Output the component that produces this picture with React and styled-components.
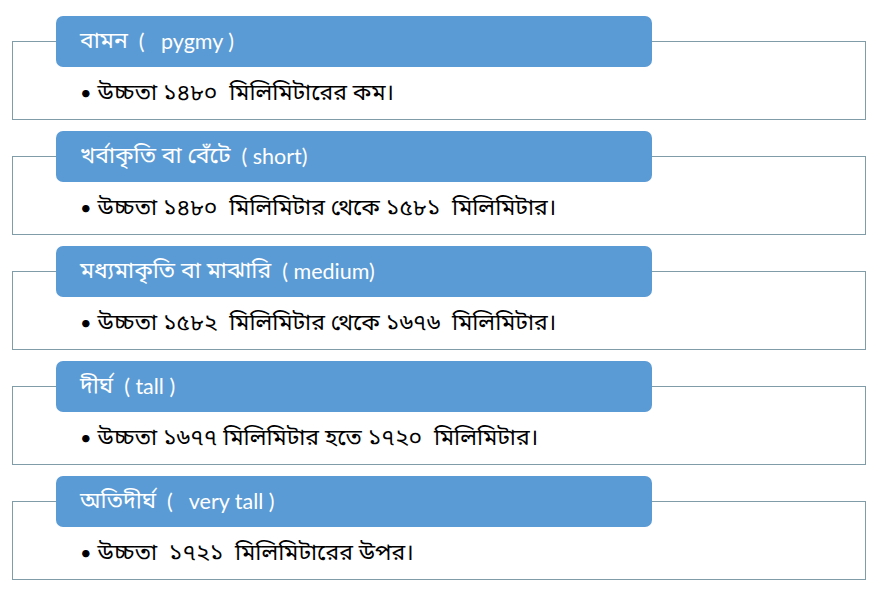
import React from "react";
import { styled, createGlobalStyle } from "styled-components";

const items = [
  { bn: "বামন", en: "  (   pygmy )", text: "উচ্চতা ১৪৮০  মিলিমিটারের কম।" },
  { bn: "খর্বাকৃতি বা বেঁটে", en: "  ( short)", text: "উচ্চতা ১৪৮০  মিলিমিটার থেকে ১৫৮১  মিলিমিটার।" },
  { bn: "মধ্যমাকৃতি বা মাঝারি", en: "  ( medium)", text: "উচ্চতা ১৫৮২  মিলিমিটার থেকে ১৬৭৬  মিলিমিটার।" },
  { bn: "দীর্ঘ", en: "  ( tall )", text: "উচ্চতা ১৬৭৭ মিলিমিটার হতে ১৭২০  মিলিমিটার।" },
  { bn: "অতিদীর্ঘ", en: "  (   very tall )", text: "উচ্চতা  ১৭২১  মিলিমিটারের উপর।" },
];

const App = () => {
  return (
    <>
      <GlobalStyle />
      <Page>
        {items.map((item) => (
          <Item key={item.bn}>
            <Header>
              <Bangla>{item.bn}</Bangla>
              <span>{item.en}</span>
            </Header>
            <Box>
              <Bullet>{item.text}</Bullet>
            </Box>
          </Item>
        ))}
      </Page>
    </>
  );
};

const GlobalStyle = createGlobalStyle`
  body {
    margin: 0;
    background: #ffffff;
    font-family: Lato, "Noto Sans Bengali", "Noto Sans", sans-serif;
  }
`;

const Page = styled.div`
  width: 881px;
  height: 593px;
  box-sizing: border-box;
  padding: 16px 15px 0 12px;
  display: flex;
  flex-direction: column;
  gap: 11px;
`;

const Item = styled.div`
  display: flex;
  flex-direction: column;
`;

const Header = styled.div`
  position: relative;
  z-index: 1;
  margin-left: 44px;
  width: 596px;
  height: 51px;
  box-sizing: border-box;
  padding: 0 24px 2px;
  display: flex;
  align-items: center;
  background: #5b9bd5;
  border-radius: 7px;
  color: #ffffff;
  font-size: 21.5px;
  white-space: pre;
`;

const Bangla = styled.span`
  font-size: 23px;
`;

const Box = styled.div`
  margin-top: -26px;
  height: 79px;
  box-sizing: border-box;
  padding: 24px 0 0 67px;
  border: 1px solid #7f9ca8;
  display: flex;
  align-items: center;
`;

const Bullet = styled.div`
  color: #000000;
  font-size: 23px;
  white-space: pre;
  &::before {
    content: "•";
    font-size: 20px;
    margin-right: 6px;
  }
`;

export default App;
